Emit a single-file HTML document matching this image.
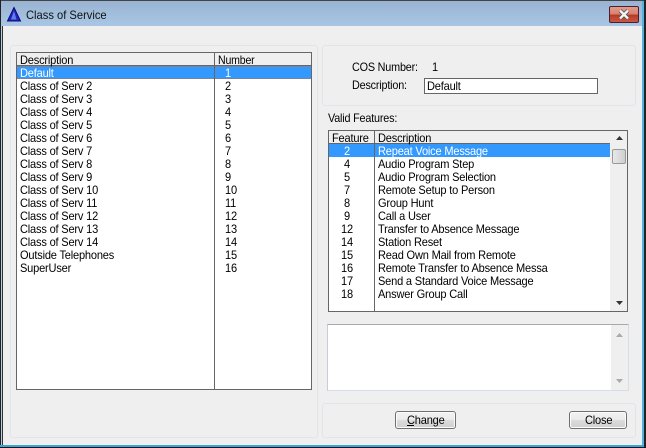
<!DOCTYPE html>
<html><head><meta charset="utf-8"><style>
html,body{margin:0;padding:0;background:#000}
#w{position:relative;width:646px;height:448px;overflow:hidden;background:#efefef;font:12px/13px "Liberation Sans",sans-serif;color:#000}
#w div{position:absolute;white-space:nowrap}
.t{position:absolute;white-space:nowrap;letter-spacing:-.2px;margin-top:1px;transform:scaleX(.92);transform-origin:0 0}
.l{transform:scaleX(.9)}
.g{border:1px solid #dfe5ea;border-radius:3px;box-sizing:border-box}
.btn{box-sizing:border-box;border:1px solid #707070;border-radius:3px;background:linear-gradient(#f3f3f3 0,#ebebeb 48%,#dcdcdc 52%,#cfcfcf 100%);box-shadow:inset 0 0 0 1px #fbfbfb}
</style></head><body><div id="w">
<!-- frame -->
<div style="left:0;top:0;width:646px;height:448px;background:#b4cfe8"></div>
<div style="left:0;top:0;width:646px;height:1px;background:#444"></div>
<div style="left:1px;top:1px;width:643px;height:25px;background:linear-gradient(#98b4d2,#a9c6e4)"></div>
<div style="left:0;top:0;width:1px;height:448px;background:#222"></div>
<div style="left:2px;top:26px;width:1px;height:421px;background:#333"></div>
<div style="left:642px;top:1px;width:2px;height:446px;background:#50b4de"></div>
<div style="left:644px;top:0;width:2px;height:448px;background:#222"></div>
<div style="left:3px;top:26px;width:639px;height:419px;background:#efefef"></div>
<div style="left:0;top:445px;width:644px;height:2px;background:#38a7d8"></div>
<div style="left:0;top:447px;width:646px;height:1px;background:#111"></div>
<!-- title -->
<svg style="position:absolute;left:6px;top:6px" width="16" height="16" viewBox="0 0 16 16"><path d="M8 1.5 L14.5 15 L1.5 15 Z" fill="#2222c4" stroke="#0c0c70"/><path d="M8 5 L5 13.5 L10.5 13.5 Z" fill="#5f80ea"/></svg>
<span class="t" style="left:26px;top:8px;letter-spacing:0;transform:scaleX(.93);color:#111">Class of Service</span>
<!-- close -->
<div style="left:609px;top:6px;width:30px;height:17px;box-sizing:border-box;border:1px solid #4a2030;border-radius:2px;background:linear-gradient(#e39a8c 0,#d98272 45%,#b83a28 55%,#c85a44 100%)"></div>
<svg style="position:absolute;left:618px;top:9px" width="12" height="11" viewBox="0 0 12 11"><path d="M2 1.5 L10 9.5 M10 1.5 L2 9.5" stroke="#4a5058" stroke-width="4"/><path d="M2 1.5 L10 9.5 M10 1.5 L2 9.5" stroke="#f4f4f4" stroke-width="2.4"/></svg>
<!-- groups -->
<div class="g" style="left:10px;top:45px;width:308px;height:393px"></div>
<div class="g" style="left:322px;top:45px;width:314px;height:61px"></div>
<div class="g" style="left:322px;top:403px;width:314px;height:35px"></div>
<!-- left list -->
<div style="left:16px;top:52px;width:296px;height:338px;box-sizing:border-box;border:1px solid #666;background:#fff"></div>
<div style="left:17px;top:53px;width:294px;height:12px;background:#efefef"></div>
<div style="left:17px;top:65px;width:294px;height:1px;background:#666"></div>
<div style="left:17px;top:66px;width:294px;height:13px;background:#3399ff"></div>
<div style="left:17px;top:66px;width:294px;height:1px;background:repeating-linear-gradient(90deg,#b8743c 0 1px,#3399ff 1px 2px)"></div>
<div style="left:17px;top:78px;width:294px;height:1px;background:repeating-linear-gradient(90deg,#b8743c 0 1px,#3399ff 1px 2px)"></div>
<div style="left:214px;top:53px;width:1px;height:336px;background:#666"></div>
<span class="t" style="left:20px;top:53px">Description</span><span class="t" style="left:218px;top:53px;transform:scaleX(.88)">Number</span>
<span class="t" style="left:20px;top:66px;color:#fff">Default</span><span class="t" style="left:225px;top:66px;color:#fff">1</span>
<span class="t" style="left:20px;top:79px">Class of Serv 2</span><span class="t" style="left:225px;top:79px">2</span>
<span class="t" style="left:20px;top:92px">Class of Serv 3</span><span class="t" style="left:225px;top:92px">3</span>
<span class="t" style="left:20px;top:105px">Class of Serv 4</span><span class="t" style="left:225px;top:105px">4</span>
<span class="t" style="left:20px;top:118px">Class of Serv 5</span><span class="t" style="left:225px;top:118px">5</span>
<span class="t" style="left:20px;top:131px">Class of Serv 6</span><span class="t" style="left:225px;top:131px">6</span>
<span class="t" style="left:20px;top:144px">Class of Serv 7</span><span class="t" style="left:225px;top:144px">7</span>
<span class="t" style="left:20px;top:157px">Class of Serv 8</span><span class="t" style="left:225px;top:157px">8</span>
<span class="t" style="left:20px;top:170px">Class of Serv 9</span><span class="t" style="left:225px;top:170px">9</span>
<span class="t" style="left:20px;top:183px">Class of Serv 10</span><span class="t" style="left:225px;top:183px">10</span>
<span class="t" style="left:20px;top:196px">Class of Serv 11</span><span class="t" style="left:225px;top:196px">11</span>
<span class="t" style="left:20px;top:209px">Class of Serv 12</span><span class="t" style="left:225px;top:209px">12</span>
<span class="t" style="left:20px;top:222px">Class of Serv 13</span><span class="t" style="left:225px;top:222px">13</span>
<span class="t" style="left:20px;top:235px">Class of Serv 14</span><span class="t" style="left:225px;top:235px">14</span>
<span class="t" style="left:20px;top:248px">Outside Telephones</span><span class="t" style="left:225px;top:248px">15</span>
<span class="t" style="left:20px;top:261px">SuperUser</span><span class="t" style="left:225px;top:261px">16</span>
<!-- COS -->
<span class="t l" style="left:352px;top:60px">COS Number:</span><span class="t" style="left:432px;top:60px">1</span>
<span class="t l" style="left:352px;top:78px">Description:</span>
<div style="left:424px;top:78px;width:174px;height:16px;box-sizing:border-box;border:1px solid #666;background:#fff"></div>
<span class="t" style="left:427px;top:79px">Default</span>
<span class="t l" style="left:328px;top:111px">Valid Features:</span>
<!-- features list -->
<div style="left:328px;top:130px;width:300px;height:182px;box-sizing:border-box;border:1px solid #666;background:#fff"></div>
<div style="left:329px;top:131px;width:281px;height:12px;background:#efefef"></div>
<div style="left:329px;top:143px;width:281px;height:1px;background:#666"></div>
<div style="left:329px;top:144px;width:281px;height:13px;background:#3399ff"></div>
<div style="left:374px;top:131px;width:1px;height:180px;background:#666"></div>
<div style="left:610px;top:131px;width:17px;height:180px;background:#efefef"></div>
<div style="left:612px;top:149px;width:14px;height:15px;box-sizing:border-box;border:1px solid #999;border-radius:2px;background:linear-gradient(90deg,#e8e8e8,#cfcfcf)"></div>
<svg style="position:absolute;left:615px;top:136px" width="9" height="5"><path d="M4.5 0 L8 4 L1 4 Z" fill="#333"/></svg>
<svg style="position:absolute;left:615px;top:301px" width="9" height="5"><path d="M1 0 L8 0 L4.5 4 Z" fill="#333"/></svg>
<span class="t" style="left:332px;top:131px">Feature</span><span class="t" style="left:378px;top:131px">Description</span>
<span class="t" style="left:344px;top:144px;color:#fff">2</span><span class="t" style="left:378px;top:144px;color:#fff">Repeat Voice Message</span>
<span class="t" style="left:344px;top:157px">4</span><span class="t" style="left:378px;top:157px">Audio Program Step</span>
<span class="t" style="left:344px;top:170px">5</span><span class="t" style="left:378px;top:170px">Audio Program Selection</span>
<span class="t" style="left:344px;top:183px">7</span><span class="t" style="left:378px;top:183px">Remote Setup to Person</span>
<span class="t" style="left:344px;top:196px">8</span><span class="t" style="left:378px;top:196px">Group Hunt</span>
<span class="t" style="left:344px;top:209px">9</span><span class="t" style="left:378px;top:209px">Call a User</span>
<span class="t" style="left:341px;top:222px">12</span><span class="t" style="left:378px;top:222px">Transfer to Absence Message</span>
<span class="t" style="left:341px;top:235px">14</span><span class="t" style="left:378px;top:235px">Station Reset</span>
<span class="t" style="left:341px;top:248px">15</span><span class="t" style="left:378px;top:248px">Read Own Mail from Remote</span>
<span class="t" style="left:341px;top:261px">16</span><span class="t" style="left:378px;top:261px">Remote Transfer to Absence Messa</span>
<span class="t" style="left:341px;top:274px">17</span><span class="t" style="left:378px;top:274px">Send a Standard Voice Message</span>
<span class="t" style="left:341px;top:287px">18</span><span class="t" style="left:378px;top:287px">Answer Group Call</span>
<!-- memo -->
<div style="left:327px;top:324px;width:302px;height:67px;box-sizing:border-box;border:1px solid #d5dde6;border-top-color:#a8a8b0;border-left-color:#c8ccd4;background:#fff"></div>
<div style="left:611px;top:325px;width:17px;height:65px;background:#efefef"></div>
<svg style="position:absolute;left:615px;top:333px" width="9" height="5"><path d="M4.5 0 L8 4 L1 4 Z" fill="#aaa"/></svg>
<svg style="position:absolute;left:615px;top:379px" width="9" height="5"><path d="M1 0 L8 0 L4.5 4 Z" fill="#aaa"/></svg>
<!-- buttons -->
<div class="btn" style="left:395px;top:411px;width:61px;height:18px"></div>
<div class="btn" style="left:569px;top:411px;width:58px;height:18px"></div>
<span class="t" style="left:407px;top:413px">Change</span>
<span class="t" style="left:585px;top:413px">Close</span>
<div style="left:407px;top:425px;width:7px;height:1px;background:#000"></div>
</div></body></html>
